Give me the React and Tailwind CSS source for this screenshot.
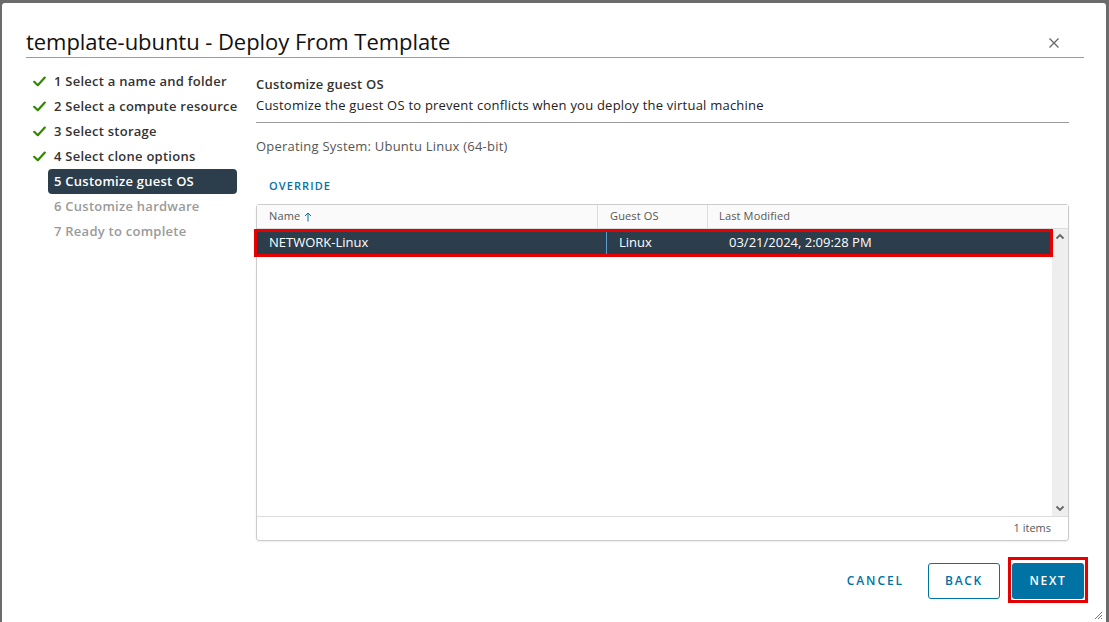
import React from "react";

const font = { fontFamily: '"Open Sans", "Liberation Sans", sans-serif' };

function Check() {
  return (
    <svg width="13" height="11" viewBox="0 0 13 11" className="shrink-0">
      <path d="M1.2 5.8 L4.8 9.2 L11.8 1.6" fill="none" stroke="#318700" strokeWidth="2.2" strokeLinecap="round" strokeLinejoin="round" />
    </svg>
  );
}

function NavItem({ label, done, active, disabled }) {
  return (
    <div className="flex items-center h-[25px]">
      <div className="w-[22px] shrink-0 flex justify-end pr-[2px]">{done ? <Check /> : null}</div>
      <div
        className={
          "flex-1 min-w-0 h-[25px] flex items-center px-[6px] rounded-[4px] text-[13px] font-semibold tracking-[0.25px] whitespace-nowrap " +
          (active ? "bg-[#2c3e4c] text-white" : disabled ? "text-[#9a9a9a]" : "text-[#333333]")
        }
      >
        {label}
      </div>
    </div>
  );
}

export default function App() {
  return (
    <div className="w-[1109px] h-[622px] bg-[#6b6b6b] pt-[3px] pl-[2px] pr-[3px] overflow-hidden" style={font}>
      <div className="relative h-full bg-white rounded-t-[3px] flex flex-col pl-[24px] pr-[22px]">
        {/* header */}
        <div className="flex items-end justify-between h-[55px] border-b border-[#9a9a9a] pb-[1px]">
          <div className="text-[22px] leading-[30px] text-[#111111] font-normal tracking-[-0.05px]">template-ubuntu - Deploy From Template</div>
          <svg width="12" height="12" viewBox="0 0 12 12" className="mr-[24px] mb-[7px]">
            <path d="M1.5 1.5 L10.5 10.5 M10.5 1.5 L1.5 10.5" stroke="#666" strokeWidth="1.3" />
          </svg>
        </div>

        {/* body */}
        <div className="flex flex-1">
          {/* nav */}
          <div className="w-[211px] shrink-0 pt-[11px] flex flex-col">
            <NavItem label="1 Select a name and folder" done />
            <NavItem label="2 Select a compute resource" done />
            <NavItem label="3 Select storage" done />
            <NavItem label="4 Select clone options" done />
            <NavItem label="5 Customize guest OS" active />
            <NavItem label="6 Customize hardware" disabled />
            <NavItem label="7 Ready to complete" disabled />
          </div>

          {/* content */}
          <div className="ml-[19px] w-[813px] flex flex-col">
            <div className="pt-[17px] text-[13px] font-semibold text-[#333333] leading-[18px] tracking-[0.2px]">Customize guest OS</div>
            <div className="pt-[3px] text-[13px] text-[#222222] leading-[18px] pb-[8px] border-b border-[#9a9a9a] tracking-[0.22px]">
              Customize the guest OS to prevent conflicts when you deploy the virtual machine
            </div>
            <div className="pt-[14px] text-[13px] text-[#565656] leading-[18px] tracking-[0.22px]">Operating System: Ubuntu Linux (64-bit)</div>
            <div className="pt-[24px] pl-[13px] text-[11px] font-semibold tracking-[0.1em] text-[#0072a3] leading-[14px]">OVERRIDE</div>

            {/* table */}
            <div className="mt-[11px] h-[337px] border border-[#cccccc] rounded-[3px] flex flex-col shadow-[0_1px_2px_rgba(0,0,0,0.08)]">
              <div className="h-[24px] bg-[#fafafa] border-b border-[#dddddd] flex text-[11px] text-[#565656] items-stretch tracking-[0.15px]">
                <div className="w-[341px] pl-[12px] flex items-center border-r border-[#dddddd] gap-[4px]">
                  Name
                  <svg width="8" height="10" viewBox="0 0 8 10">
                    <path d="M4 9.5 V1 M1 4 L4 1 L7 4" fill="none" stroke="#0072a3" strokeWidth="1" />
                  </svg>
                </div>
                <div className="w-[110px] pl-[12px] flex items-center border-r border-[#dddddd]">Guest OS</div>
                <div className="flex-1 pl-[11px] flex items-center">Last Modified</div>
              </div>
              <div className="flex flex-1 min-h-0">
                <div className="flex-1 flex flex-col">
                  <div className="relative h-[26px] mt-[1px] bg-[#2c3e4c] text-white text-[13px] flex items-stretch">
                    <div className="w-[350px] pl-[12px] flex items-center border-r border-[#5a9fcc]">NETWORK-Linux</div>
                    <div className="w-[110px] pl-[12px] flex items-center">Linux</div>
                    <div className="flex-1 pl-[12px] flex items-center">03/21/2024, 2:09:28 PM</div>
                    <span className="absolute -left-[3px] -top-[1px] -right-[1px] -bottom-[1px] border-[3px] border-[#e80000] pointer-events-none" />
                  </div>
                </div>
                <div className="w-[16px] bg-[#eeeeee] flex flex-col justify-between items-center py-[4px]">
                  <svg width="10" height="7" viewBox="0 0 10 7">
                    <path d="M1.5 5.5 L5 2 L8.5 5.5" fill="none" stroke="#666" strokeWidth="1.8" />
                  </svg>
                  <svg width="10" height="7" viewBox="0 0 10 7">
                    <path d="M1.5 1.5 L5 5 L8.5 1.5" fill="none" stroke="#666" strokeWidth="1.8" />
                  </svg>
                </div>
              </div>
              <div className="h-[24px] border-t border-[#dddddd] flex items-center justify-end pr-[17px] text-[11px] text-[#565656]">
                1 items
              </div>
            </div>
          </div>
        </div>

        {/* footer */}
        <div className="h-[79px] flex items-start justify-end pt-[20px] gap-[12px]">
          <button className="h-[36px] px-[12px] text-[12px] font-semibold tracking-[0.16em] text-[#0072a3]">CANCEL</button>
          <button className="h-[36px] w-[72px] rounded-[3px] border border-[#0072a3] text-[12px] font-semibold tracking-[0.14em] text-[#0072a3]">BACK</button>
          <div className="relative">
            <button className="h-[36px] w-[72px] rounded-[3px] bg-[#0072a3] text-[12px] font-semibold tracking-[0.14em] text-white">NEXT</button>
            <span className="absolute -left-[4px] -top-[6px] -right-[4px] -bottom-[4px] border-[3px] border-[#e80000] pointer-events-none" />
          </div>
        </div>

        {/* resize grip */}
        <svg width="9" height="9" viewBox="0 0 9 9" className="absolute right-[3px] bottom-[2px]">
          <path d="M8 1 L1 8 M8 4 L4 8 M8 7 L7 8" stroke="#777" strokeWidth="1" />
        </svg>
      </div>
    </div>
  );
}
